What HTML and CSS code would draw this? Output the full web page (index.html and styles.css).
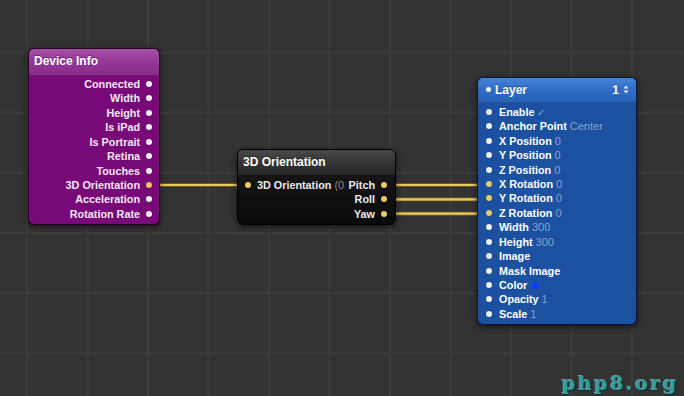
FILE: index.html
```html
<!DOCTYPE html>
<html>
<head>
<meta charset="utf-8">
<link rel="stylesheet" href="styles.css">
</head>
<body>
<div class="canvas">
  <svg class="wires" width="684" height="396" viewBox="0 0 684 396">
    <g stroke="#7a6428" stroke-width="3.6" fill="none">
      <line x1="150" y1="185" x2="248" y2="185"/>
      <line x1="384" y1="185" x2="489" y2="185"/>
      <line x1="384" y1="199.4" x2="489" y2="199.4"/>
      <line x1="384" y1="213.6" x2="489" y2="213.6"/>
    </g>
    <g stroke="#ecc95e" stroke-width="2.2" fill="none">
      <line x1="150" y1="185" x2="248" y2="185"/>
      <line x1="384" y1="185" x2="489" y2="185"/>
      <line x1="384" y1="199.4" x2="489" y2="199.4"/>
      <line x1="384" y1="213.6" x2="489" y2="213.6"/>
    </g>
  </svg>

  <div class="node node-device">
    <div class="node-head">Device Info</div>
    <div class="node-body">
      <div class="row out"><span class="lbl">Connected</span><i class="port"></i></div>
      <div class="row out"><span class="lbl">Width</span><i class="port"></i></div>
      <div class="row out"><span class="lbl">Height</span><i class="port"></i></div>
      <div class="row out"><span class="lbl">Is iPad</span><i class="port"></i></div>
      <div class="row out"><span class="lbl">Is Portrait</span><i class="port"></i></div>
      <div class="row out"><span class="lbl">Retina</span><i class="port"></i></div>
      <div class="row out"><span class="lbl">Touches</span><i class="port"></i></div>
      <div class="row out"><span class="lbl">3D Orientation</span><i class="port port-on"></i></div>
      <div class="row out"><span class="lbl">Acceleration</span><i class="port"></i></div>
      <div class="row out"><span class="lbl">Rotation Rate</span><i class="port"></i></div>
    </div>
  </div>

  <div class="node node-orient">
    <div class="node-head">3D Orientation</div>
    <div class="node-body">
      <div class="row split">
        <span class="side"><i class="port port-on"></i><span class="lbl">3D Orientation <em class="val">(0</em></span></span>
        <span class="side"><span class="lbl">Pitch</span><i class="port port-on"></i></span>
      </div>
      <div class="row out"><span class="lbl">Roll</span><i class="port port-on"></i></div>
      <div class="row out"><span class="lbl">Yaw</span><i class="port port-on"></i></div>
    </div>
  </div>

  <div class="node node-layer">
    <div class="node-head layer-head">
      <i class="head-dot"></i><span class="head-title">Layer</span>
      <span class="head-count">1
        <svg class="stepper" width="6" height="9" viewBox="0 0 6 9"><path d="M3 0.5 L5.6 3.6 L0.4 3.6 Z M3 8.5 L5.6 5.4 L0.4 5.4 Z" fill="#dfe8f6"/></svg>
      </span>
    </div>
    <div class="node-body">
      <div class="row in"><i class="port"></i><span class="lbl">Enable <em class="val check">✓</em></span></div>
      <div class="row in"><i class="port"></i><span class="lbl">Anchor Point <em class="val">Center</em></span></div>
      <div class="row in"><i class="port"></i><span class="lbl">X Position <em class="val">0</em></span></div>
      <div class="row in"><i class="port"></i><span class="lbl">Y Position <em class="val">0</em></span></div>
      <div class="row in"><i class="port"></i><span class="lbl">Z Position <em class="val">0</em></span></div>
      <div class="row in"><i class="port port-on"></i><span class="lbl">X Rotation <em class="val">0</em></span></div>
      <div class="row in"><i class="port port-on"></i><span class="lbl">Y Rotation <em class="val">0</em></span></div>
      <div class="row in"><i class="port port-on"></i><span class="lbl">Z Rotation <em class="val">0</em></span></div>
      <div class="row in"><i class="port"></i><span class="lbl">Width <em class="val">300</em></span></div>
      <div class="row in"><i class="port"></i><span class="lbl">Height <em class="val">300</em></span></div>
      <div class="row in"><i class="port"></i><span class="lbl">Image</span></div>
      <div class="row in"><i class="port"></i><span class="lbl">Mask Image</span></div>
      <div class="row in"><i class="port"></i><span class="lbl">Color <i class="swatch"></i></span></div>
      <div class="row in"><i class="port"></i><span class="lbl">Opacity <em class="val">1</em></span></div>
      <div class="row in"><i class="port"></i><span class="lbl">Scale <em class="val">1</em></span></div>
    </div>
  </div>

  <div class="watermark">php8.org</div>
</div>
</body>
</html>
```

FILE: styles.css
```css
html, body {
  margin: 0;
  padding: 0;
  background: #333333;
}

.canvas {
  position: relative;
  width: 684px;
  height: 396px;
  overflow: hidden;
  background-color: #333333;
  background-image:
    linear-gradient(to right, #3c3c3c 0, #3c3c3c 1.5px, transparent 1.5px),
    linear-gradient(to bottom, #3c3c3c 0, #3c3c3c 1.5px, transparent 1.5px);
  background-size: 60.5px 60.2px;
  background-position: 26px 51.5px;
  font-family: "Liberation Sans", Arial, sans-serif;
}

.wires {
  position: absolute;
  left: 0;
  top: 0;
}

.node {
  position: absolute;
  display: flex;
  flex-direction: column;
  border: 1px solid rgba(0, 0, 0, 0.75);
  border-radius: 6px;
  box-shadow: 0 2px 6px rgba(0, 0, 0, 0.6);
  overflow: hidden;
  box-sizing: border-box;
}

.node-head {
  height: 26px;
  display: flex;
  align-items: center;
  padding: 0 5px;
  font-size: 12px;
  font-weight: bold;
  color: #ffffff;
  text-shadow: 0 -1px 0 rgba(0, 0, 0, 0.35);
  box-sizing: border-box;
  border-bottom: 1px solid rgba(0, 0, 0, 0.25);
}

.node-body {
  display: flex;
  flex-direction: column;
  padding: 2px 0 3px;
}

.row {
  height: 14.43px;
  display: flex;
  align-items: center;
  font-size: 10.8px;
  font-weight: bold;
  white-space: nowrap;
}

.row.out {
  justify-content: flex-end;
  gap: 6px;
}

.row.in {
  gap: 7px;
}

.row.split {
  justify-content: space-between;
}

.side {
  display: flex;
  align-items: center;
  gap: 6px;
}

.port {
  display: block;
  width: 6px;
  height: 6px;
  border-radius: 50%;
  background: #f4f4f4;
  box-shadow: 0 0 1px rgba(0, 0, 0, 0.5);
  flex: none;
}

.port-on {
  background: #eccb62;
}

.val {
  font-style: normal;
  font-weight: normal;
  font-size: 11px;
}

/* Device Info */
.node-device {
  left: 28px;
  top: 48px;
  width: 132px;
  height: 177px;
  background: #770a78;
}

.node-device .node-head {
  background: linear-gradient(to bottom, #a650a6 0%, #96399a 45%, #8a2c8c 100%);
}

.node-device .row {
  padding-right: 7px;
  color: #f6e6f6;
}

/* 3D Orientation */
.node-orient {
  left: 237px;
  top: 149px;
  width: 159px;
  height: 76px;
  background: linear-gradient(to bottom, #191919, #0b0b0b);
  border-color: #000;
}

.node-orient .node-head {
  background: linear-gradient(to bottom, #4a4a4a 0%, #343434 50%, #262626 100%);
  border-bottom: 1px solid #111;
}

.node-orient .row {
  padding: 0 8px 0 7px;
  color: #ececec;
}

.node-orient .val {
  color: #8c8c8c;
}

/* Layer */
.node-layer {
  left: 477px;
  top: 77px;
  width: 160px;
  height: 248px;
  background: #1c51a2;
  border-color: rgba(5, 15, 40, 0.9);
}

.node-layer .node-head {
  background: linear-gradient(to bottom, #4584d8 0%, #306dc5 50%, #2663ba 100%);
  padding: 0 7px 0 8px;
  height: 27px;
}

.node-layer .node-body {
  padding-top: 2.5px;
}

.layer-head {
  gap: 4px;
}

.head-dot {
  display: block;
  width: 5px;
  height: 5px;
  border-radius: 50%;
  background: #f2f2f2;
}

.head-title {
  flex: 1;
}

.head-count {
  display: flex;
  align-items: center;
  gap: 4px;
}

.stepper {
  display: block;
}

.node-layer .row {
  padding-left: 8px;
  color: #ffffff;
}

.node-layer .val {
  color: #86a2d0;
}

.check {
  font-size: 10px;
  color: #a8b8d8;
}

.swatch {
  display: inline-block;
  width: 7px;
  height: 7px;
  border-radius: 50%;
  background: #0a3cff;
  margin-left: 2px;
  vertical-align: -0.5px;
}

/* watermark */
.watermark {
  position: absolute;
  right: 5px;
  bottom: 2px;
  font-family: "DejaVu Serif", "Liberation Serif", serif;
  font-weight: bold;
  font-size: 19px;
  letter-spacing: 2.6px;
  color: #2c9c9a;
  text-shadow: -1px -1px 0 rgba(200, 240, 240, 0.5), 1px 1px 0 #0e2a2a;
}
```
